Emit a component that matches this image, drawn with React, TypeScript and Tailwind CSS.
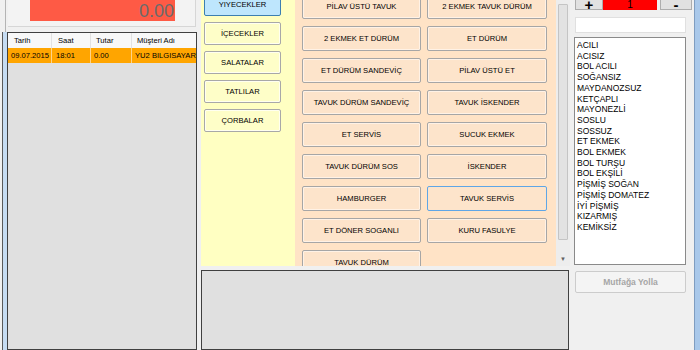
import React from "react";

const categories = ["YIYECEKLER", "İÇECEKLER", "SALATALAR", "TATLILAR", "ÇORBALAR"];

const products = [
  "PİLAV ÜSTÜ TAVUK",
  "2 EKMEK TAVUK DÜRÜM",
  "2 EKMEK ET DÜRÜM",
  "ET DÜRÜM",
  "ET DÜRÜM SANDEVİÇ",
  "PİLAV ÜSTÜ ET",
  "TAVUK DÜRÜM SANDEVİÇ",
  "TAVUK İSKENDER",
  "ET SERVİS",
  "SUCUK EKMEK",
  "TAVUK DÜRÜM SOS",
  "İSKENDER",
  "HAMBURGER",
  "TAVUK SERVİS",
  "ET DÖNER SOGANLI",
  "KURU FASULYE",
  "TAVUK DÜRÜM",
];

const extras = [
  "ACILI",
  "ACISIZ",
  "BOL ACILI",
  "SOĞANSIZ",
  "MAYDANOZSUZ",
  "KETÇAPLI",
  "MAYONEZLİ",
  "SOSLU",
  "SOSSUZ",
  "ET EKMEK",
  "BOL EKMEK",
  "BOL TURŞU",
  "BOL EKŞİLİ",
  "PİŞMİŞ SOĞAN",
  "PİŞMİŞ DOMATEZ",
  "İYİ PİŞMİŞ",
  "KIZARMIŞ",
  "KEMİKSİZ",
];

export default function App() {
  return (
    <div className="w-[700px] h-[350px] overflow-hidden flex bg-[#f0f0f0] text-black font-['Liberation_Sans',Arial,sans-serif]">
      {/* LEFT COLUMN */}
      <div className="w-[200px] h-full flex flex-col shrink-0">
        <div className="h-[32px] flex shrink-0">
          <div className="w-[6px] border-r border-[#b4b4b4]" />
          <div className="w-[188px] ml-[2px] h-[27px] border-b border-r border-[#d6d6d6] bg-[#f3f3f3] pl-[22px]">
            <div className="w-[145px] h-[21px] bg-[#fe5a45] flex items-center justify-end pr-[1px] text-[18px] leading-none text-[#6b6b6b]">
              0.00
            </div>
          </div>
        </div>
        <div className="flex flex-1 min-h-0">
          <div className="w-[2px]" />
          <div className="w-[5px] bg-[#c6dcf2] border-l border-[#5a5a5a]" />
          <div className="w-[190px] h-full border border-[#404040] bg-[#e0e0e0] text-[7.6px]">
            <div className="flex h-[15px] bg-[#f8f8f8] items-center">
              <div className="w-[44px] h-full flex items-center pl-[6px] border-r border-[#e2e2e2]">Tarih</div>
              <div className="w-[39px] h-full flex items-center pl-[6px] border-r border-[#e2e2e2]">Saat</div>
              <div className="w-[41px] h-full flex items-center pl-[5px] border-r border-[#e2e2e2]">Tutar</div>
              <div className="flex-1 h-full flex items-center pl-[5px]">Müşteri Adı</div>
            </div>
            <div className="flex h-[15px] bg-[#ffa500] items-center whitespace-nowrap overflow-hidden">
              <div className="w-[44px] h-full flex items-center pl-[3px] border-r border-[#ffd38a]">09.07.2015</div>
              <div className="w-[39px] h-full flex items-center pl-[4px] border-r border-[#ffd38a]">18:01</div>
              <div className="w-[41px] h-full flex items-center pl-[3px] border-r border-[#ffd38a]">0.00</div>
              <div className="flex-1 h-full flex items-center pl-[3px] overflow-hidden">YU2 BILGISAYAR</div>
            </div>
          </div>
        </div>
      </div>

      {/* MIDDLE COLUMN */}
      <div className="w-[370px] h-full flex flex-col shrink-0">
        <div className="h-[266px] flex shrink-0">
          <div className="w-[1px]" />
          <div className="w-[94px] h-full bg-[#ffffc2] overflow-hidden pl-[3px]">
            <div className="flex flex-col gap-[6px] mt-[-7px]">
              {categories.map((c, i) => (
                <div
                  key={c}
                  className={
                    i === 0
                      ? "w-[77px] h-[23px] flex items-center justify-center text-[7.6px] border border-[#3c7fb1] bg-[#bee6fd] rounded-[2px]"
                      : "w-[77px] h-[23px] flex items-center justify-center text-[7.6px] border border-[#a8a8a8] bg-[#fefec8] rounded-[2px] shadow-[inset_0_0_0_1px_#fffff0]"
                  }
                >
                  {c}
                </div>
              ))}
            </div>
          </div>
          <div className="w-[261px] h-full bg-[#ffe3c6] overflow-hidden pl-[7px]">
            <div className="grid grid-cols-[119px_120px] gap-x-[6px] gap-y-[7px] mt-[-6px]">
              {products.map((p) => (
                <div
                  key={p}
                  className={
                    p === "TAVUK SERVİS"
                      ? "h-[25px] flex items-center justify-center text-[7.6px] border border-[#5fa6e6] bg-[#fde4cb] rounded-[2px]"
                      : "h-[25px] flex items-center justify-center text-[7.6px] border border-[#a6a6a6] bg-[#fde4cb] rounded-[2px] shadow-[inset_0_0_0_1px_#fff2e6]"
                  }
                >
                  {p}
                </div>
              ))}
            </div>
          </div>
          <div className="w-[14px] h-full bg-[#ededed] flex flex-col items-center pt-[4px]">
            <div className="w-[10px] h-[236px] bg-[#e2e2e2] border border-[#c4c4c4] rounded-[1px]" />
            <div className="flex-1" />
            <div className="h-[14px] flex items-center justify-center text-[6px] text-[#606060] leading-none">▼</div>
          </div>
        </div>
        <div className="mt-[4px] ml-[1px] w-[368px] flex-1 border border-[#404040] bg-[#e0e0e0]" />
      </div>

      {/* RIGHT COLUMN */}
      <div className="w-[124px] h-full flex flex-col pl-[5px] shrink-0">
        <div className="flex h-[10px] shrink-0">
          <div className="w-[28px] h-full border-x border-b border-[#adadad] bg-[#e1e1e1] flex items-center justify-center text-[15px] leading-[9px] font-bold">
            +
          </div>
          <div className="w-[54px] h-full bg-[#ff0000] flex items-center justify-center text-[10px] leading-[10px]">
            1
          </div>
          <div className="w-[32px] ml-[3px] h-full border-x border-b border-[#adadad] bg-[#e1e1e1] flex items-center justify-center text-[15px] leading-[9px] font-bold">
            -
          </div>
        </div>
        <div className="mt-[7px] w-[111px] h-[16px] bg-white border border-[#e0e0e0] shrink-0" />
        <div className="mt-[4px] ml-[-1px] w-[112px] h-[228px] bg-white border border-[#8a8a8a] pl-[2px] pt-[2px] text-[8.5px] leading-[10.7px] shrink-0">
          {extras.map((e) => (
            <div key={e}>{e}</div>
          ))}
        </div>
        <div className="mt-[6px] w-[111px] h-[22px] border border-[#cccccc] bg-[#f4f4f4] rounded-[2px] flex items-center justify-center text-[8.5px] font-bold text-[#a6a6a6] shrink-0">
          Mutfağa Yolla
        </div>
      </div>

      {/* window edge */}
      <div className="w-[6px] h-full bg-[#a9c8ea] border-l border-[#7f9dc0] shrink-0" />
    </div>
  );
}
